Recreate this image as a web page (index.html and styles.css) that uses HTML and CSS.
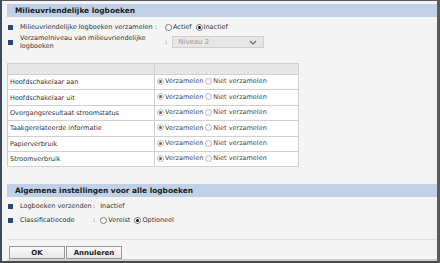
FILE: index.html
```html
<!DOCTYPE html>
<html lang="nl">
<head>
  <meta charset="UTF-8" />
  <title>Milieuvriendelijke logboeken</title>
  <link rel="stylesheet" href="styles.css">
</head>
<body>
  <div class="frame">
    <section class="panel">
      <h2 class="bar">Milieuvriendelijke logboeken</h2>

      <div class="fields wide">
        <span class="bullet"></span>
        <span class="label">Milieuvriendelijke logboeken verzamelen :</span>
        <span class="value">
          <label class="opt"><input type="radio" name="collect"> Actief</label>
          <label class="opt"><input type="radio" name="collect" checked> Inactief</label>
        </span>

        <span class="bullet"></span>
        <span class="label">Verzamelniveau van milieuvriendelijke logboeken</span>
        <span class="value">
          <span class="colon">:</span>
          <span class="select">Niveau 2
            <svg class="chev" width="8" height="5" viewBox="0 0 8 5"><path d="M1 1l3 3 3-3" fill="none" stroke="#666" stroke-width="1.1"/></svg>
          </span>
        </span>
      </div>

      <table class="logs">
        <thead>
          <tr><th></th><th></th></tr>
        </thead>
        <tbody>
          <tr><td>Hoofdschakelaar aan</td><td><label class="opt"><input type="radio" name="r1" checked disabled> Verzamelen</label> <label class="opt"><input type="radio" name="r1" disabled> Niet verzamelen</label></td></tr>
          <tr><td>Hoofdschakelaar uit</td><td><label class="opt"><input type="radio" name="r2" checked disabled> Verzamelen</label> <label class="opt"><input type="radio" name="r2" disabled> Niet verzamelen</label></td></tr>
          <tr><td>Overgangsresultaat stroomstatus</td><td><label class="opt"><input type="radio" name="r3" checked disabled> Verzamelen</label> <label class="opt"><input type="radio" name="r3" disabled> Niet verzamelen</label></td></tr>
          <tr><td>Taakgerelateerde informatie</td><td><label class="opt"><input type="radio" name="r4" checked disabled> Verzamelen</label> <label class="opt"><input type="radio" name="r4" disabled> Niet verzamelen</label></td></tr>
          <tr><td>Papierverbruik</td><td><label class="opt"><input type="radio" name="r5" checked disabled> Verzamelen</label> <label class="opt"><input type="radio" name="r5" disabled> Niet verzamelen</label></td></tr>
          <tr><td>Stroomverbruik</td><td><label class="opt"><input type="radio" name="r6" checked disabled> Verzamelen</label> <label class="opt"><input type="radio" name="r6" disabled> Niet verzamelen</label></td></tr>
        </tbody>
      </table>
    </section>

    <section class="panel general">
      <h2 class="bar">Algemene instellingen voor alle logboeken</h2>

      <div class="fields narrow">
        <span class="bullet"></span>
        <span class="label">Logboeken verzenden</span>
        <span class="value"><span class="colon">:</span> Inactief</span>

        <span class="bullet"></span>
        <span class="label">Classificatiecode</span>
        <span class="value">
          <span class="colon">:</span>
          <label class="opt"><input type="radio" name="class"> Vereist</label>
          <label class="opt"><input type="radio" name="class" checked> Optioneel</label>
        </span>
      </div>
    </section>

    <div class="actions">
      <button class="btn">OK</button>
      <button class="btn">Annuleren</button>
    </div>
  </div>
</body>
</html>
```

FILE: styles.css
```css
html, body {
  margin: 0;
  height: 100%;
}

body {
  font-family: "DejaVu Sans", Verdana, sans-serif;
  font-size: 6.5px;
  color: #333;
  background: #f4f4f4;
}

.frame {
  box-sizing: border-box;
  height: 263px;
  border-top: 1px solid #5a5a5a;
  border-left: 2px solid #3b4a5e;
  border-right: 3px solid #5a5a5a;
  border-bottom: 2px solid #4a4a4a;
  padding: 3px 0 0 5px;
  display: flex;
  flex-direction: column;
  background: #f4f4f4;
}

.bar {
  margin: 0;
  height: 13px;
  line-height: 13px;
  padding-left: 8px;
  background: #bfd0e7;
  font-size: 7.4px;
  font-weight: bold;
  color: #1a1a1a;
}

/* label rows */
.fields {
  display: grid;
  align-items: center;
  padding-left: 1px;
}

.fields.wide {
  grid-template-columns: 12px 145px auto;
  row-gap: 3px;
  padding-top: 6px;
}

.fields.narrow {
  grid-template-columns: 12px 73px auto;
  row-gap: 6px;
  padding-top: 5px;
}

.bullet {
  width: 5px;
  height: 5px;
  background: #2b4776;
  align-self: center;
}

.label {
  line-height: 8px;
}

.value {
  display: flex;
  align-items: center;
  gap: 4px;
}

.colon {
  margin-right: 1px;
}

.opt {
  display: inline-flex;
  align-items: center;
  gap: 1px;
}

input[type="radio"] {
  appearance: none;
  margin: 0;
  width: 7px;
  height: 7px;
  border: 1px solid #777;
  border-radius: 50%;
  background: #fff;
  box-sizing: border-box;
  position: relative;
}

input[type="radio"]:checked::after {
  content: "";
  position: absolute;
  left: 1px;
  top: 1px;
  width: 3px;
  height: 3px;
  border-radius: 50%;
  background: #111;
}

input[type="radio"]:disabled {
  border-color: #bbb;
  background: #f8f8f8;
}

input[type="radio"]:disabled:checked::after {
  background: #666;
}

.select {
  box-sizing: border-box;
  width: 92px;
  height: 12px;
  padding: 0 6px 0 5px;
  display: flex;
  align-items: center;
  justify-content: space-between;
  background: #e6e6e6;
  border: 1px solid #cfcfcf;
  color: #999;
  font-size: 7px;
}

/* table */
.logs {
  margin-top: 13px;
  border-collapse: collapse;
  background: #fff;
  width: 292px;
}

.logs th,
.logs td {
  border: 1px solid #d0d0d0;
  padding: 0 2px;
  text-align: left;
}

.logs th {
  background: #e6e6e6;
  height: 10px;
}

.logs td {
  height: 14.4px;
}

.logs td:first-child {
  width: 142px;
}

.logs td .opt {
  color: #444;
}

.general {
  margin-top: 17px;
}

.actions {
  margin-top: auto;
  border-top: 1px solid #e0e0e0;
  padding: 6px 0 0 2px;
  display: flex;
  border-bottom: 2px solid #cfcfcf;
}

.btn {
  font-family: inherit;
  font-size: 7px;
  font-weight: bold;
  color: #222;
  background: linear-gradient(#fafafa, #e8e8e8);
  border: 1px solid #999;
  height: 13px;
  padding: 0;
  margin: 0 1px 0 0;
  width: 56px;
}
```
